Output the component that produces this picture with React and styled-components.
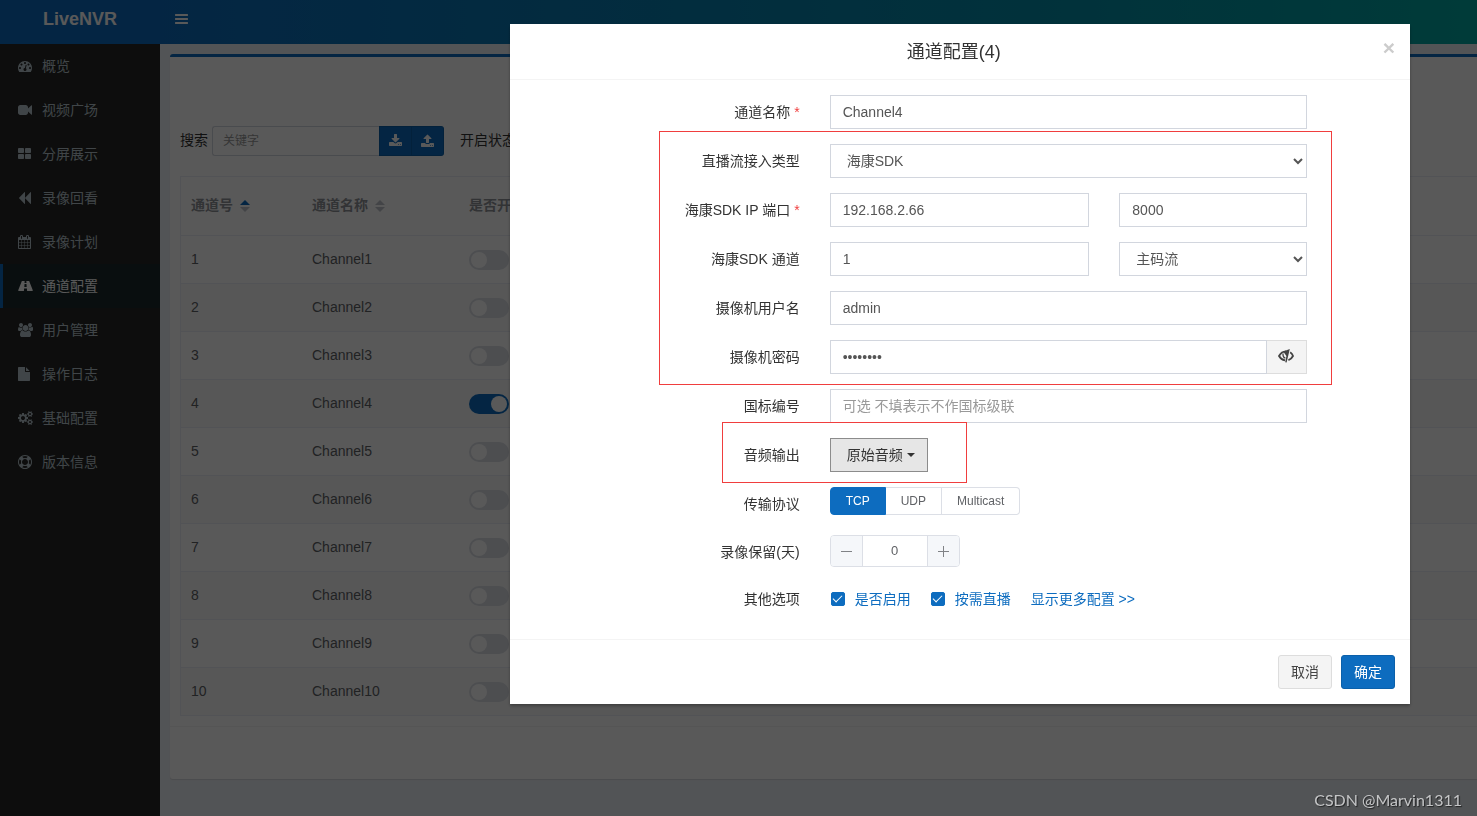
import { useState } from "react";
import styled, { createGlobalStyle, css, ThemeProvider } from "styled-components";

const theme = {
  primary: "#0d6cbf",
  text: "#333",
  inputText: "#555",
  inputBorder: "#d2d6de",
  line: "#ebeef5",
  danger: "#f03e3e",
  font: '"Liberation Sans", "Noto Sans CJK SC", sans-serif',
};

const GlobalStyle = createGlobalStyle`
* {
  box-sizing: border-box;
}
body {
  margin: 0;
  overflow: hidden;
  font-family: ${({ theme }) => theme.font};
  font-size: 14px;
  line-height: 20px;
  color: ${({ theme }) => theme.text};
  background: #ecf0f5;
}
button, input, select {
  font: inherit;
}
a {
  text-decoration: none;
}
`;

/* ---------- icons ---------- */

const Icon = ({ d, box = 1792, size = 14 }) => (
  <svg width={(box / 1792) * size} height={size} viewBox={`0 0 ${box} 1792`} fill="currentColor" aria-hidden="true">
    <path d={d} />
  </svg>
);

const cogSmall =
  "q0 16-149 31-12 27-30 52 51 113 51 138 0 4-4 7-122 71-124 71-8 0-46-47t-52-68q-20 2-30 2t-30-2q-14 21-52 68t-46 47q-2 0-124-71-4-3-4-7 0-25 51-138-18-25-30-52-149-15-149-31v-140q0-16 149-31 13-29 30-52-51-113-51-138 0-4 4-7 4-2 35-20t59-34 30-16q8 0 46 46.5t52 67.5q20-2 30-2t30 2q51-71 92-112l6-2q4 0 124 70 4 3 4 7 0 25-51 138 17 23 30 52 149 15 149 31z";

const icons = {
  dashboard:
    "M384 1152q0-53-37.5-90.5t-90.5-37.5-90.5 37.5-37.5 90.5 37.5 90.5 90.5 37.5 90.5-37.5 37.5-90.5zm192-448q0-53-37.5-90.5t-90.5-37.5-90.5 37.5-37.5 90.5 37.5 90.5 90.5 37.5 90.5-37.5 37.5-90.5zm428 481l101-382q6-26-7.5-48.5t-38.5-29.5-48 6.5-30 39.5l-101 382q-60 5-107 43.5t-63 98.5q-20 77 20 146t117 89 146-20 89-117q16-60-6-117t-72-91zm660-33q0-53-37.5-90.5t-90.5-37.5-90.5 37.5-37.5 90.5 37.5 90.5 90.5 37.5 90.5-37.5 37.5-90.5zm-640-640q0-53-37.5-90.5t-90.5-37.5-90.5 37.5-37.5 90.5 37.5 90.5 90.5 37.5 90.5-37.5 37.5-90.5zm448 192q0-53-37.5-90.5t-90.5-37.5-90.5 37.5-37.5 90.5 37.5 90.5 90.5 37.5 90.5-37.5 37.5-90.5zm320 448q0 261-141 483-19 29-54 29h-1402q-35 0-54-29-141-221-141-483 0-182 71-348t191-286 286-191 348-71 348 71 286 191 191 286 71 348z",
  video:
    "M1792 352v1088q0 42-39 59-13 5-25 5-27 0-45-19l-403-403v166q0 119-84.5 203.5t-203.5 84.5h-704q-119 0-203.5-84.5t-84.5-203.5v-704q0-119 84.5-203.5t203.5-84.5h704q119 0 203.5 84.5t84.5 203.5v165l403-402q18-19 45-19 12 0 25 5 39 17 39 59z",
  grid:
    "M768 1024v384q0 52-38 90t-90 38h-512q-52 0-90-38t-38-90v-384q0-52 38-90t90-38h512q52 0 90 38t38 90zm0-768v384q0 52-38 90t-90 38h-512q-52 0-90-38t-38-90v-384q0-52 38-90t90-38h512q52 0 90 38t38 90zm896 768v384q0 52-38 90t-90 38h-512q-52 0-90-38t-38-90v-384q0-52 38-90t90-38h512q52 0 90 38t38 90zm0-768v384q0 52-38 90t-90 38h-512q-52 0-90-38t-38-90v-384q0-52 38-90t90-38h512q52 0 90 38t38 90z",
  backward:
    "M1619 141q19-19 32-13t13 32v1472q0 26-13 32t-32-13l-710-710q-9-9-13-19v710q0 26-13 32t-32-13l-710-710q-19-19-19-45t19-45l710-710q19-19 32-13t13 32v710q4-10 13-19z",
  calendar:
    "M128 1664h288v-288h-288v288zm352 0h320v-288h-320v288zm-352-352h288v-320h-288v320zm352 0h320v-320h-320v320zm-352-384h288v-288h-288v288zm736 736h320v-288h-320v288zm-384-736h320v-288h-320v288zm768 736h288v-288h-288v288zm-384-352h320v-320h-320v320zm-352-864v-288q0-13-9.500-22.500t-22.500-9.500h-64q-13 0-22.500 9.500t-9.500 22.500v288q0 13 9.500 22.500t22.500 9.500h64q13 0 22.500-9.500t9.500-22.500zm736 864h288v-320h-288v320zm-384-384h320v-288h-320v288zm384 0h288v-288h-288v288zm32-480v-288q0-13-9.500-22.500t-22.500-9.500h-64q-13 0-22.500 9.500t-9.500 22.500v288q0 13 9.500 22.500t22.500 9.500h64q13 0 22.500-9.500t9.500-22.500zm384-64v1280q0 52-38 90t-90 38h-1408q-52 0-90-38t-38-90v-1280q0-52 38-90t90-38h128v-96q0-66 47-113t113-47h64q66 0 113 47t47 113v96h384v-96q0-66 47-113t113-47h64q66 0 113 47t47 113v96h128q52 0 90 38t38 90z",
  road:
    "M1111 1000v-4l-24-320q-1-13-11-22.500t-23-9.500h-186q-13 0-23 9.500t-11 22.500l-24 320v4q-1 12 8 20t21 8h244q12 0 21-8t8-20zm772 463q0 73-46 73h-704q13 0 22-9.500t8-22.500l-20-256q-1-13-11-22.500t-23-9.500h-298q-13 0-23 9.500t-11 22.500l-20 256q-1 13 8 22.500t22 9.500h-704q-46 0-46-73 0-54 26-116l417-1044q8-19 26-33t38-14h339q-13 0-23 9.500t-11 22.500l-15 192q-1 14 8 23t22 9h192q13 0 22-9t8-23l-15-192q-1-13-11-22.500t-23-9.500h339q20 0 38 14t26 33l417 1044q26 62 26 116z",
  users:
    "M593 896q-162 5-265 128h-134q-82 0-138-40.500t-56-118.500q0-353 124-353 6 0 43.500 21t97.500 42.500 119 21.500q67 0 133-23-5 37-5 66 0 159 92 289zm1071 637q0 120-73 189.500t-194 69.500h-874q-121 0-194-69.500t-73-189.500q0-53 3.500-103.500t14-109 26.500-108.500 43-97.500 62-81 85.500-53.500 111.500-20q10 0 43 21.500t73 48 107 48 135 21.500 135-21.500 107-48 73-48 43-21.500q61 0 111.500 20t85.500 53.500 62 81 43 97.500 26.500 108.500 14 109 3.500 103.500zm-1024-1277q0 106-75 181t-181 75-181-75-75-181 75-181 181-75 181 75 75 181zm704 384q0 159-112.500 271.500t-271.500 112.500-271.500-112.500-112.500-271.500 112.500-271.500 271.500-112.500 271.500 112.500 112.500 271.500zm576 225q0 78-56 118.500t-138 40.500h-134q-103-123-265-128 92-130 92-289 0-29-5-66 66 23 133 23 59 0 119-21.500t97.500-42.500 43.500-21q124 0 124 353zm-128-609q0 106-75 181t-181 75-181-75-75-181 75-181 181-75 181 75 75 181z",
  file:
    "M1024 512v-472q22 14 36 28l408 408q14 14 28 36h-472zm-128 32q0 40 28 68t68 28h544v1056q0 40-28 68t-68 28h-1344q-40 0-68-28t-28-68v-1600q0-40 28-68t68-28h800v544z",
  cogs:
    "M896 896q0-106-75-181t-181-75-181 75-75 181 75 181 181 75 181-75 75-181zm768 512q0-52-38-90t-90-38-90 38-38 90q0 53 37.500 90.500t90.500 37.500 90.500-37.500 37.500-90.500zm0-1024q0-52-38-90t-90-38-90 38-38 90q0 53 37.500 90.500t90.500 37.500 90.500-37.500 37.500-90.500zm-384 421v185q0 10-7 19.500t-16 10.500l-155 24q-11 35-32 76 34 48 90 115 7 11 7 20 0 12-7 19-23 30-82.500 89.500t-78.500 59.500q-11 0-21-7l-115-90q-37 19-77 31-11 108-23 155-7 24-30 24h-186q-11 0-20-7.500t-10-17.500l-23-153q-34-10-75-31l-118 89q-7 7-20 7-11 0-21-8-144-133-144-160 0-9 7-19 10-14 41-53t47-61q-23-44-35-82l-152-24q-10-1-17-9.500t-7-19.500v-185q0-10 7-19.500t16-10.500l155-24q11-35 32-76-34-48-90-115-7-11-7-20 0-12 7-20 22-30 82-89t79-59q11 0 21 7l115 90q34-18 77-32 11-108 23-154 7-24 30-24h186q11 0 20 7.500t10 17.500l23 153q34 10 75 31l118-89q8-7 20-7 11 0 21 8 144 133 144 160 0 8-7 19-12 16-42 54t-45 60q23 48 34 82l152 23q10 2 17 10.500t7 19.500zm640 533v140" +
    cogSmall +
    "m0-1024v140" +
    cogSmall,
  ring:
    "M896 0q182 0 348 71t286 191 191 286 71 348-71 348-191 286-286 191-348 71-348-71-286-191-191-286-71-348 71-348 191-286 286-191 348-71zm0 128q-190 0-361 90l194 194q82-28 167-28t167 28l194-194q-171-90-361-90zm-678 1129l194-194q-28-82-28-167t28-167l-194-194q-90 171-90 361t90 361zm678 407q190 0 361-90l-194-194q-82 28-167 28t-167-28l-194 194q171 90 361 90zm0-384q159 0 271.500-112.500t112.500-271.500-112.500-271.500-271.500-112.500-271.500 112.500-112.500 271.500 112.500 271.500 271.500 112.500zm484-217l194 194q90-171 90-361t-90-361l-194 194q28 82 28 167t-28 167z",
  bars:
    "M1664 1344v128q0 26-19 45t-45 19h-1536q-26 0-45-19t-19-45v-128q0-26 19-45t45-19h1536q26 0 45 19t19 45zm0-512v128q0 26-19 45t-45 19h-1536q-26 0-45-19t-19-45v-128q0-26 19-45t45-19h1536q26 0 45 19t19 45zm0-512v128q0 26-19 45t-45 19h-1536q-26 0-45-19t-19-45v-128q0-26 19-45t45-19h1536q26 0 45 19t19 45z",
  download:
    "M1280 1344q0-26-19-45t-45-19-45 19-19 45 19 45 45 19 45-19 19-45zm256 0q0-26-19-45t-45-19-45 19-19 45 19 45 45 19 45-19 19-45zm128-224v320q0 40-28 68t-68 28h-1472q-40 0-68-28t-28-68v-320q0-40 28-68t68-28h465l135 136q58 56 136 56t136-56l136-136h464q40 0 68 28t28 68zm-325-569q17 41-14 70l-448 448q-18 19-45 19t-45-19l-448-448q-31-29-14-70 17-39 59-39h256v-448q0-26 19-45t45-19h256q26 0 45 19t19 45v448h256q42 0 59 39z",
  upload:
    "M1280 1472q0-26-19-45t-45-19-45 19-19 45 19 45 45 19 45-19 19-45zm256 0q0-26-19-45t-45-19-45 19-19 45 19 45 45 19 45-19 19-45zm128-224v320q0 40-28 68t-68 28h-1472q-40 0-68-28t-28-68v-320q0-40 28-68t68-28h427q21 56 70.500 92t110.500 36h256q61 0 110.500-36t70.500-92h427q40 0 68 28t28 68zm-325-648q-17 40-59 40h-256v448q0 26-19 45t-45 19h-256q-26 0-45-19t-19-45v-448h-256q-42 0-59-40-17-39 14-69l448-448q18-19 45-19t45 19l448 448q31 30 14 69z",
};

const EyeSlash = () => (
  <svg width="16" height="16" viewBox="0 0 16 16" fill="none" stroke="currentColor" aria-hidden="true">
    <path d="M7 12.400C4 11.800 2 9.800 1 8 2.400 5.400 4.600 3.400 8 3.300" strokeWidth="1.800" />
    <path d="M12.200 4.300C13.800 5.400 14.600 6.600 15 8c-.9 1.800-2.300 3.400-4.600 4.200" strokeWidth="1.800" />
    <path d="M5 5.500C4.800 8 5.600 9.600 7.400 10.200" strokeWidth="1.300" />
    <path d="M5.200 3.600L11.800 1 8.600 14.400 7.200 14.200 8.400 8z" fill="currentColor" stroke="none" />
  </svg>
);

/* ---------- page ---------- */

const Page = styled.div`
min-height: 100vh;
display: flex;
flex-direction: column;
`;

const Header = styled.header`
height: 44px;
padding-bottom: 6px;
display: flex;
align-items: center;
color: #fff;
background: linear-gradient(to right, ${({ theme }) => theme.primary} 160px, #048fa9 72%, #00a9a3 100%);
`;

const Logo = styled.a`
width: 160px;
text-align: center;
font-size: 18px;
font-weight: bold;
color: #fff;
`;

const MenuToggle = styled.button`
padding: 0 15px;
border: 0;
display: flex;
color: inherit;
background: none;
`;

const Main = styled.div`
flex: 1;
display: flex;
`;

const Sidebar = styled.nav`
flex: 0 0 160px;
background: #252525;
`;

const NavItem = styled.a`
height: 44px;
padding-left: 15px;
border-left: 3px solid transparent;
display: flex;
align-items: center;
color: #b8c7ce;
${(props) =>
  props.$active &&
  css`
  color: #fff;
  border-left-color: ${({ theme }) => theme.primary};
  background: #1b292b;
  `}
`;

const NavIcon = styled.span`
width: 24px;
display: flex;
`;

const Content = styled.main`
flex: 1;
min-width: 0;
padding: 10px 0 36px 10px;
`;

const Panel = styled.section`
border-top: 3px solid ${({ theme }) => theme.primary};
border-radius: 3px 0 0 3px;
background: #fff;
box-shadow: 0 1px 1px rgba(0, 0, 0, 0.1);
`;

const PanelBody = styled.div`
padding: 69px 0 10px 10px;
`;

const PanelFooter = styled.div`
height: 53px;
border-top: 1px solid #f4f4f4;
`;

const Filters = styled.form`
margin-bottom: 20px;
display: flex;
align-items: center;
gap: 16px;
white-space: nowrap;

label, span {
  padding-bottom: 2px;
}
`;

const Search = styled.div`
display: flex;
align-items: center;

label {
  margin-right: 4px;
}
`;

const SearchInput = styled.input`
width: 167px;
height: 30px;
padding: 0 10px;
border: 1px solid ${({ theme }) => theme.inputBorder};
border-right: 0;
border-radius: 3px 0 0 3px;
font-size: 12px;
&::placeholder {
  color: #999;
}
`;

const SearchButton = styled.button`
width: 33px;
height: 30px;
padding: 0;
border: 1px solid #0b60aa;
display: flex;
align-items: center;
justify-content: center;
color: #fff;
background: ${({ theme }) => theme.primary};
&:last-child {
  width: 32px;
  border-left: 0;
  border-radius: 0 3px 3px 0;
}
`;

const Table = styled.table`
width: 100%;
table-layout: fixed;
border-collapse: separate;
border-spacing: 0;
border: 1px solid ${({ theme }) => theme.line};
border-width: 1px 0 0 1px;
color: #606266;

th, td {
  height: 48px;
  padding: 0 10px 2px;
  border-bottom: 1px solid ${({ theme }) => theme.line};
  text-align: left;
}
th {
  height: 59px;
  color: #909399;
}
tbody tr:nth-child(even) {
  background: #fafafa;
}
`;

const Sort = styled.span`
margin-left: 7px;
display: inline-flex;
flex-direction: column;
gap: 2px;
vertical-align: middle;

&::before, &::after {
  content: "";
  border: 5px solid transparent;
}
&::before {
  border-top-width: 0;
  border-bottom-color: ${(props) => (props.$ascending ? props.theme.primary : "#c0c4cc")};
}
&::after {
  border-bottom-width: 0;
  border-top-color: #c0c4cc;
}
`;

const Switch = styled.input`
appearance: none;
width: 40px;
height: 20px;
margin: 2px 0 0;
padding: 2px;
border-radius: 10px;
display: flex;
background: #dcdfe6;

&::before {
  content: "";
  width: 16px;
  height: 16px;
  border-radius: 50%;
  background: #fff;
}
&:checked {
  justify-content: flex-end;
  background: ${({ theme }) => theme.primary};
}
`;

/* ---------- dialog ---------- */

const Overlay = styled.div`
position: fixed;
inset: 0;
padding: 24px 67px 24px 24px;
display: flex;
align-items: flex-start;
justify-content: flex-end;
overflow: auto;
background: rgba(0, 0, 0, 0.65);
`;

const Dialog = styled.div`
width: 900px;
max-width: 100%;
background: #fff;
box-shadow: 0 2px 3px rgba(0, 0, 0, 0.3);
`;

const DialogHeader = styled.div`
padding: 16px 15px 14px;
border-bottom: 1px solid #f4f4f4;
display: flex;
align-items: flex-start;

h4 {
  flex: 1;
  margin: 0;
  font-size: 18px;
  font-weight: normal;
  line-height: 25px;
  text-align: center;
}
`;

const Close = styled.button`
padding: 0;
border: 0;
font-size: 21px;
font-weight: bold;
line-height: 16px;
color: #ccc;
background: none;
`;

const DialogBody = styled.div`
padding: 15px 16px 15px 15px;
`;

const DialogFooter = styled.div`
padding: 15px;
border-top: 1px solid #f4f4f4;
display: flex;
justify-content: flex-end;
gap: 9px;
`;

const Button = styled.button`
height: 34px;
padding: 0 12px;
border: 1px solid #ddd;
border-radius: 3px;
color: #444;
background: #f4f4f4;
${(props) =>
  props.$primary &&
  css`
  color: #fff;
  border-color: #0b60aa;
  background: ${({ theme }) => theme.primary};
  `}
`;

const Row = styled.div`
margin-bottom: 15px;
display: grid;
grid-template-columns: repeat(12, 1fr);
align-items: start;
`;

const Label = styled.label`
grid-column: span 4;
padding: 7px 15px 0;
text-align: right;
`;

const Required = styled.span`
margin-left: 4px;
color: ${({ theme }) => theme.danger};
`;

const Cell = styled.div`
grid-column: span ${(props) => props.$span || 7};
min-width: 0;
padding: 0 15px;
display: flex;
`;

const control = css`
width: 100%;
min-width: 0;
height: 34px;
padding: 0 12px;
border: 1px solid ${({ theme }) => theme.inputBorder};
border-radius: 0;
color: ${({ theme }) => theme.inputText};
background: #fff;
&::placeholder {
  color: #999;
}
`;

const Input = styled.input`
${control}
`;

const Select = styled.select`
${control}
`;

const AddonButton = styled.button`
flex: 0 0 40px;
padding: 0 0 2px;
border: 1px solid #ddd;
border-left: 0;
display: flex;
align-items: center;
justify-content: center;
color: #444;
background: #f4f4f4;
`;

const Dropdown = styled.button`
height: 34px;
padding: 0 12px 0 16px;
border: 1px solid #8c8c8c;
display: flex;
align-items: center;
gap: 4px;
color: #333;
background: #e6e6e6;
&::after {
  content: "";
  border: 4px solid transparent;
  border-top-color: #333;
  border-bottom-width: 0;
}
`;

/* red frames drawn round the settings that matter */
const Marked = styled.div`
position: relative;
&::after {
  content: "";
  position: absolute;
  top: ${(props) => props.$top};
  right: ${(props) => props.$right};
  bottom: ${(props) => props.$bottom};
  left: ${(props) => props.$left};
  border: 1px solid ${({ theme }) => theme.danger};
  pointer-events: none;
}
`;

const RadioGroup = styled.div`
margin-bottom: 5px;
display: flex;

label {
  height: 28px;
  padding: 0 15px;
  border: 1px solid #dcdfe6;
  border-left-width: 0;
  font-size: 12px;
  line-height: 26px;
  color: #606266;
}
label:first-child {
  border-left-width: 1px;
  border-radius: 4px 0 0 4px;
}
label:last-child {
  border-radius: 0 4px 4px 0;
}
label:has(input:checked) {
  color: #fff;
  border-color: ${({ theme }) => theme.primary};
  background: ${({ theme }) => theme.primary};
}
input {
  appearance: none;
  position: absolute;
  margin: 0;
}
`;

const Stepper = styled.div`
width: 130px;
height: 32px;
border: 1px solid #dcdfe6;
border-radius: 4px;
display: flex;
overflow: hidden;

button {
  flex: 0 0 31px;
  padding: 0;
  border: 0;
  display: flex;
  align-items: center;
  justify-content: center;
  color: #808286;
  background: #f5f7fa;
}
input {
  flex: 1;
  min-width: 0;
  padding: 0;
  border: 1px solid #dcdfe6;
  border-width: 0 1px;
  font-size: 13px;
  text-align: center;
  color: #606266;
}
`;

const Options = styled.div`
padding: 7px 0 0 1px;
display: flex;
gap: 20px;
color: ${({ theme }) => theme.primary};

label {
  display: flex;
  align-items: center;
  gap: 10px;
}
a {
  color: inherit;
}
`;

const CheckInput = styled.input`
appearance: none;
width: 14px;
height: 14px;
margin: 0;
border: 1px solid #dcdfe6;
border-radius: 2px;
display: flex;
justify-content: center;

&:checked {
  border-color: ${({ theme }) => theme.primary};
  background: ${({ theme }) => theme.primary};
}
&:checked::after {
  content: "";
  width: 4px;
  height: 8px;
  border: 1px solid #fff;
  border-top: 0;
  border-left: 0;
  transform: rotate(45deg);
}
`;

const Watermark = styled.div`
position: fixed;
right: 15px;
bottom: 6px;
font-family: Lato, sans-serif;
font-size: 16px;
color: #c4c5c6;
text-shadow: 1px 1px 1px rgba(0, 0, 0, 0.6);
`;

const menu = [
  { text: "概览", icon: "dashboard" },
  { text: "视频广场", icon: "video" },
  { text: "分屏展示", icon: "grid" },
  { text: "录像回看", icon: "backward" },
  { text: "录像计划", icon: "calendar" },
  { text: "通道配置", icon: "road", box: 1920, active: true },
  { text: "用户管理", icon: "users", box: 1920 },
  { text: "操作日志", icon: "file" },
  { text: "基础配置", icon: "cogs", box: 1920 },
  { text: "版本信息", icon: "ring" },
];

const channels = Array.from({ length: 10 }, (_, i) => ({ id: i + 1, name: `Channel${i + 1}`, on: i === 3 }));

const ChannelTable = () => (
  <Table>
    <colgroup>
      <col width="121" />
      <col width="157" />
      <col />
    </colgroup>
    <thead>
      <tr>
        <th>通道号<Sort $ascending /></th>
        <th>通道名称<Sort /></th>
        <th>是否开启</th>
      </tr>
    </thead>
    <tbody>
      {channels.map((channel) => (
        <tr key={channel.id}>
          <td>{channel.id}</td>
          <td>{channel.name}</td>
          <td>
            <Switch type="checkbox" role="switch" aria-label={channel.name} defaultChecked={channel.on} />
          </td>
        </tr>
      ))}
    </tbody>
  </Table>
);

const ChannelDialog = () => {
  const [showPassword, setShowPassword] = useState(false);
  const [protocol, setProtocol] = useState("TCP");
  const [days, setDays] = useState(0);

  return (
    <Dialog role="dialog" aria-labelledby="dialog-title">
      <DialogHeader>
        <h4 id="dialog-title">通道配置(4)</h4>
        <Close type="button" aria-label="关闭">×</Close>
      </DialogHeader>
      <DialogBody>
        <Row>
          <Label htmlFor="name">通道名称<Required>*</Required></Label>
          <Cell><Input id="name" defaultValue="Channel4" /></Cell>
        </Row>
        <Marked $top="-13px" $right="62px" $bottom="-11px" $left="134px">
          <Row>
            <Label htmlFor="type">直播流接入类型</Label>
            <Cell>
              <Select id="type"><option>海康SDK</option></Select>
            </Cell>
          </Row>
          <Row>
            <Label htmlFor="ip">海康SDK IP 端口<Required>*</Required></Label>
            <Cell $span={4}><Input id="ip" defaultValue="192.168.2.66" /></Cell>
            <Cell $span={3}><Input aria-label="端口" defaultValue="8000" /></Cell>
          </Row>
          <Row>
            <Label htmlFor="channel">海康SDK 通道</Label>
            <Cell $span={4}><Input id="channel" defaultValue="1" /></Cell>
            <Cell $span={3}>
              <Select aria-label="码流"><option>主码流</option></Select>
            </Cell>
          </Row>
          <Row>
            <Label htmlFor="user">摄像机用户名</Label>
            <Cell><Input id="user" defaultValue="admin" /></Cell>
          </Row>
          <Row>
            <Label htmlFor="password">摄像机密码</Label>
            <Cell>
              <Input id="password" type={showPassword ? "text" : "password"} defaultValue="12345678" />
              <AddonButton type="button" aria-label="显示密码" onClick={() => setShowPassword(!showPassword)}>
                <EyeSlash />
              </AddonButton>
            </Cell>
          </Row>
        </Marked>
        <Row>
          <Label htmlFor="code">国标编号</Label>
          <Cell><Input id="code" placeholder="可选 不填表示不作国标级联" /></Cell>
        </Row>
        <Marked $top="-16px" $right="427px" $bottom="-11px" $left="197px">
          <Row>
            <Label htmlFor="audio">音频输出</Label>
            <Cell><Dropdown id="audio" type="button">原始音频</Dropdown></Cell>
          </Row>
        </Marked>
        <Row>
          <Label as="span">传输协议</Label>
          <Cell>
            <RadioGroup role="radiogroup" aria-label="传输协议">
              {["TCP", "UDP", "Multicast"].map((item) => (
                <label key={item}>
                  <input type="radio" name="protocol" checked={protocol === item} onChange={() => setProtocol(item)} />
                  {item}
                </label>
              ))}
            </RadioGroup>
          </Cell>
        </Row>
        <Row>
          <Label htmlFor="days">录像保留(天)</Label>
          <Cell>
            <Stepper>
              <button type="button" aria-label="减少" onClick={() => setDays(Math.max(0, days - 1))}>
                <svg width="11" height="11" stroke="currentColor"><path d="M0 5.500h11" /></svg>
              </button>
              <input id="days" value={days} onChange={(e) => setDays(Number(e.target.value) || 0)} />
              <button type="button" aria-label="增加" onClick={() => setDays(days + 1)}>
                <svg width="11" height="11" stroke="currentColor"><path d="M0 5.500h11M5.500 0v11" /></svg>
              </button>
            </Stepper>
          </Cell>
        </Row>
        <Row>
          <Label as="span">其他选项</Label>
          <Cell>
            <Options>
              <label><CheckInput type="checkbox" defaultChecked />是否启用</label>
              <label><CheckInput type="checkbox" defaultChecked />按需直播</label>
              <a href="#more">显示更多配置 &gt;&gt;</a>
            </Options>
          </Cell>
        </Row>
      </DialogBody>
      <DialogFooter>
        <Button type="button">取消</Button>
        <Button type="button" $primary>确定</Button>
      </DialogFooter>
    </Dialog>
  );
};

const App = () => (
  <ThemeProvider theme={theme}>
    <GlobalStyle />
    <Page>
      <Header>
        <Logo href="#home">LiveNVR</Logo>
        <MenuToggle type="button" aria-label="菜单"><Icon d={icons.bars} /></MenuToggle>
      </Header>
      <Main>
        <Sidebar>
          {menu.map((item) => (
            <NavItem key={item.icon} href={`#${item.icon}`} $active={item.active}>
              <NavIcon><Icon d={icons[item.icon]} box={item.box} /></NavIcon>
              {item.text}
            </NavItem>
          ))}
        </Sidebar>
        <Content>
          <Panel>
            <PanelBody>
              <Filters>
                <Search>
                  <label htmlFor="search">搜索</label>
                  <SearchInput id="search" placeholder="关键字" />
                  <SearchButton type="button" aria-label="导出"><Icon d={icons.download} /></SearchButton>
                  <SearchButton type="button" aria-label="导入"><Icon d={icons.upload} /></SearchButton>
                </Search>
                <span>开启状态</span>
              </Filters>
              <ChannelTable />
            </PanelBody>
            <PanelFooter />
          </Panel>
        </Content>
      </Main>
    </Page>
    <Overlay>
      <ChannelDialog />
    </Overlay>
    <Watermark>CSDN @Marvin1311</Watermark>
  </ThemeProvider>
);

export default App;
